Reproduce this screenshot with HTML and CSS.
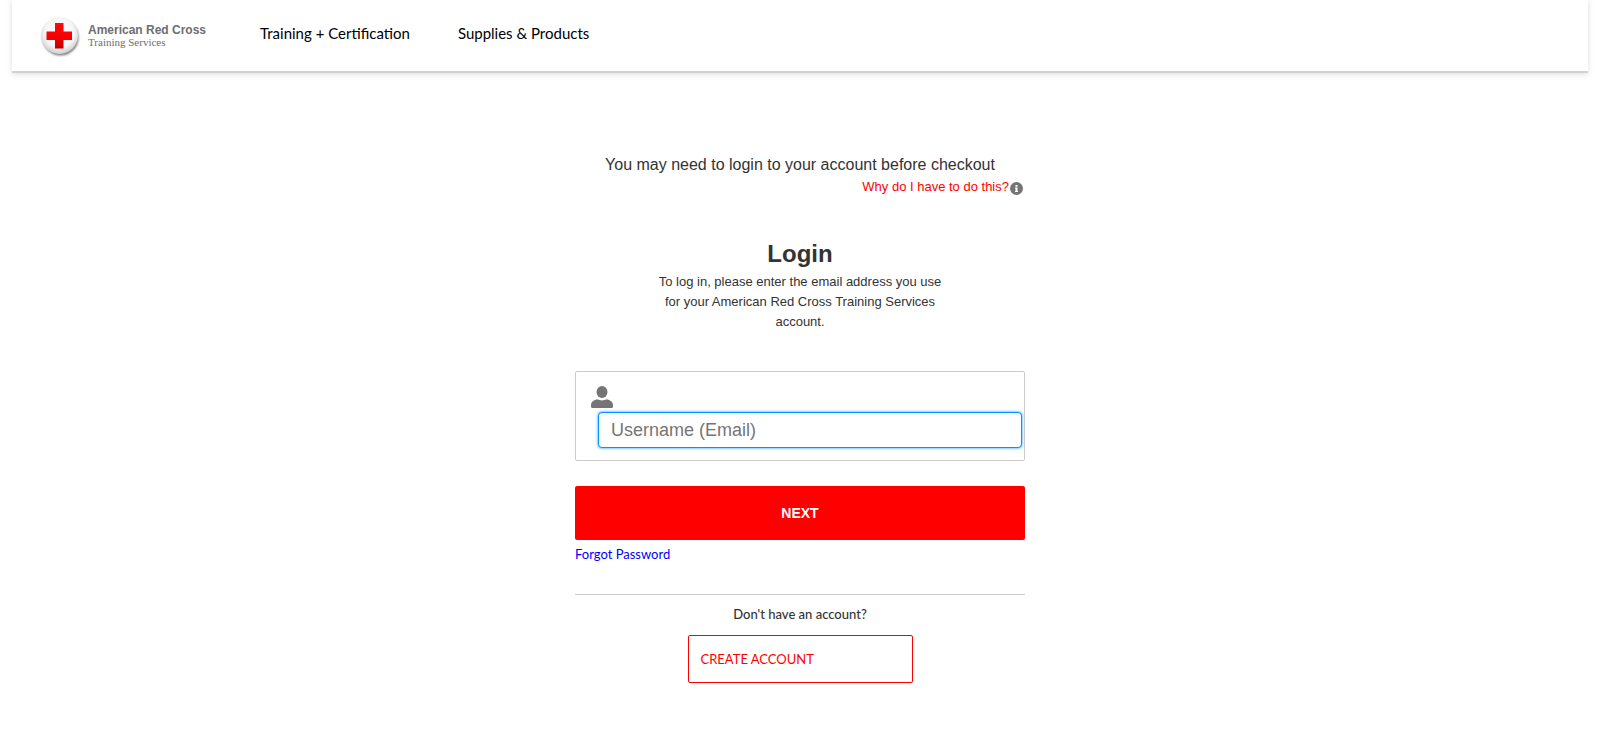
FILE: index.html
```html
<!DOCTYPE html>
<html lang="en">
<head>
<meta charset="utf-8">
<meta name="viewport" content="width=device-width, initial-scale=1">
<title>American Red Cross Training Services - Login</title>
<link rel="stylesheet" href="styles.css">
</head>
<body>
<header class="site-header">
  <a class="brand" href="#">
    <svg class="brand-mark" viewBox="0 0 42 42" aria-hidden="true">
      <defs>
        <radialGradient id="ball" cx="50%" cy="42%" r="55%">
          <stop offset="0" stop-color="#fff"/>
          <stop offset=".72" stop-color="#f6f6f6"/>
          <stop offset="1" stop-color="#d4d4d4"/>
        </radialGradient>
        <linearGradient id="cross" x1="0" y1="0" x2="0" y2="1">
          <stop offset="0" stop-color="#ff0a0a"/>
          <stop offset=".6" stop-color="#f50000"/>
          <stop offset="1" stop-color="#b80000"/>
        </linearGradient>
        <filter id="soft" x="-20%" y="-20%" width="140%" height="140%">
          <feGaussianBlur stdDeviation="1"/>
        </filter>
      </defs>
      <circle cx="20.500" cy="22.500" r="18" fill="#666" opacity=".85" filter="url(#soft)"/>
      <circle cx="19.500" cy="20.500" r="18.500" fill="url(#ball)"/>
      <path d="M15 8h8.500v8.500h8.500v8.500h-8.500v8.500h-8.500v-8.500H6.500v-8.500h8.500z" fill="url(#cross)"/>
    </svg>
    <span class="brand-text">
      <span class="brand-name">American Red Cross</span>
      <span class="brand-unit">Training Services</span>
    </span>
  </a>
  <nav class="main-nav">
    <a href="#">Training + Certification</a>
    <a href="#">Supplies &amp; Products</a>
  </nav>
</header>
<main class="login">
  <p class="notice">You may need to login to your account before checkout</p>
  <p class="why">
    <a href="#">Why do I have to do this?</a>
    <svg class="info-icon" viewBox="0 0 13 13" aria-hidden="true">
      <circle cx="6.500" cy="6.500" r="6.500" fill="#757575"/>
      <path d="M5.500 3h2v1.700h-2zM5 5.500h2.500v3.500H8v1H5V9h.5V6.500H5z" fill="#fff"/>
    </svg>
  </p>
  <h1 class="title">Login</h1>
  <p class="intro">To log in, please enter the email address you use for your American Red Cross Training Services account.</p>
  <form class="login-form">
    <div class="field">
      <svg class="user-icon" viewBox="0 0 22 22" aria-hidden="true">
        <ellipse cx="11" cy="6" rx="5.500" ry="6" fill="#757575"/>
        <path d="M6 13.300Q11 15.500 16 13.300Q22 15 22 19v1.500Q22 22 20.500 22h-19Q0 22 0 20.500V19Q0 15 6 13.300z" fill="#757575"/>
      </svg>
      <input class="username" type="email" placeholder="Username (Email)" aria-label="Username (Email)">
    </div>
    <button class="next" type="submit">NEXT</button>
  </form>
  <a class="forgot" href="#">Forgot Password</a>
  <section class="signup">
    <p class="question">Don't have an account?</p>
    <a class="create" href="#">CREATE ACCOUNT</a>
  </section>
</main>
</body>
</html>
```
FILE: styles.css
```css
* {
  box-sizing: border-box;
}

body {
  margin: 0;
  background: #fff;
  color: #333;
  font-family: "Liberation Sans", Arial, sans-serif;
}

p, h1 {
  margin: 0;
}

a {
  text-decoration: none;
}

.site-header {
  display: flex;
  align-items: center;
  gap: 54px;
  height: 73px;
  margin: 0 12px;
  padding: 0 28px;
  border-bottom: 2px solid #d2d2d2;
  box-shadow: 0 1px 6px rgba(0, 0, 0, 0.14);
}

.brand {
  display: flex;
  align-items: center;
  gap: 6px;
}

.brand-mark {
  width: 42px;
  height: 42px;
}

.brand-text {
  display: flex;
  flex-direction: column;
  white-space: nowrap;
}

.brand-name {
  color: #6d6e70;
  font-size: 12px;
  font-weight: bold;
  line-height: 12px;
}

.brand-unit {
  color: #6d6e70;
  font-family: "Liberation Serif", "Times New Roman", serif;
  font-size: 11px;
  line-height: 12px;
}

.main-nav {
  display: flex;
  gap: 48px;
  padding-bottom: 5px;
}

.main-nav a {
  color: #000;
  font-family: Lato, sans-serif;
  font-size: 15px;
  line-height: 20px;
}

.login {
  width: 100%;
  max-width: 450px;
  margin: 0 auto;
  padding: 81px 0 60px;
}

.notice {
  font-size: 16px;
  line-height: 22px;
  text-align: center;
}

.why {
  display: flex;
  justify-content: flex-end;
  align-items: center;
  gap: 1px;
  padding-right: 2px;
  font-size: 13px;
  line-height: 22px;
}

.why a {
  color: #f00;
}

.info-icon {
  width: 13px;
  height: 13px;
  margin-top: 3px;
}

.title {
  margin-top: 40px;
  font-size: 24px;
  font-weight: bold;
  line-height: 32px;
  text-align: center;
}

.intro {
  max-width: 300px;
  margin: 2px auto 0;
  font-size: 13px;
  line-height: 20px;
  text-align: center;
}

.field {
  margin-top: 39px;
  padding: 14px 2px 12px 15px;
  border: 1px solid #ccc;
  border-radius: 2px;
}

.user-icon {
  display: block;
  width: 22px;
  height: 22px;
}

.username {
  display: block;
  width: calc(100% - 7px);
  height: 36px;
  margin: 4px 0 0 7px;
  padding: 0 12px;
  border: 1px solid #0095ff;
  border-radius: 4px;
  outline: none;
  box-shadow: 0 0 3px #0095ff;
  background: #fff;
  color: #333;
  font-family: inherit;
  font-size: 18px;
}

.username::placeholder {
  color: #757575;
}

.next {
  display: block;
  width: 100%;
  height: 54px;
  margin-top: 25px;
  border: 0;
  border-radius: 2px;
  background: #f00;
  color: #fff;
  font-family: inherit;
  font-size: 14px;
  font-weight: bold;
}

.forgot {
  display: block;
  margin-top: 4px;
  color: #00f;
  font-family: Lato, sans-serif;
  font-size: 13px;
  line-height: 20px;
}

.signup {
  margin-top: 30px;
  padding-top: 9px;
  border-top: 1px solid #ccc;
  font-family: Lato, sans-serif;
  font-size: 13px;
  line-height: 20px;
}

.question {
  font-weight: 500;
  text-align: center;
}

.create {
  display: block;
  width: 50%;
  margin: 11px auto 0;
  padding: 13px 12px;
  border: 1px solid #f00;
  border-radius: 2px;
  color: #f00;
}
```
